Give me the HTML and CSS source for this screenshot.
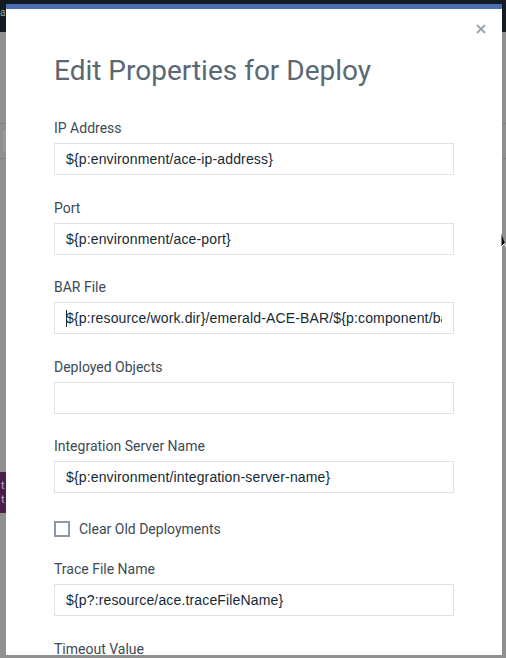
FILE: index.html
```html
<!DOCTYPE html>
<html lang="en">
<head>
<meta charset="utf-8">
<title>Edit Properties for Deploy</title>
<link rel="stylesheet" href="styles.css">
</head>
<body>
<div class="backdrop">
  <div class="topbar"><span class="topbar-text">a</span></div>
  <div class="toolbar"><span class="toolbar-btn"></span></div>
  <div class="side-tag"><span>t</span><span>t</span></div>
</div>

<div class="modal" role="dialog" aria-labelledby="modal-title">
  <button class="close" aria-label="Close">
    <svg width="10" height="10" viewBox="0 0 10 10"><path d="M1 1L9 9M9 1L1 9" stroke="#98a5b1" stroke-width="1.8" fill="none"/></svg>
  </button>
  <h1 id="modal-title" class="title">Edit Properties for Deploy</h1>

  <div class="field">
    <label class="label">IP Address</label>
    <input class="input" type="text" value="${p:environment/ace-ip-address}">
  </div>
  <div class="field">
    <label class="label">Port</label>
    <input class="input" type="text" value="${p:environment/ace-port}">
  </div>
  <div class="field">
    <label class="label">BAR File</label>
    <div class="input-wrap">
      <input class="input" type="text" value="${p:resource/work.dir}/emerald-ACE-BAR/${p:component/bar.name}">
      <span class="caret"></span>
    </div>
  </div>
  <div class="field">
    <label class="label">Deployed Objects</label>
    <input class="input" type="text" value="">
  </div>
  <div class="field">
    <label class="label">Integration Server Name</label>
    <input class="input" type="text" value="${p:environment/integration-server-name}">
  </div>
  <div class="check-row">
    <span class="checkbox"></span>
    <span class="check-label">Clear Old Deployments</span>
  </div>
  <div class="field">
    <label class="label">Trace File Name</label>
    <input class="input" type="text" value="${p?:resource/ace.traceFileName}">
  </div>
  <div class="field">
    <label class="label">Timeout Value</label>
    <input class="input" type="text" value="">
  </div>
</div>

<svg class="cursor" width="8" height="18" viewBox="0 0 8 18"><path d="M1 1L1 15L4.5 11.5L7 17" fill="#000" stroke="#fff" stroke-width="1"/></svg>
</body>
</html>
```

FILE: styles.css
```css
html, body {
  margin: 0;
  padding: 0;
}
body {
  width: 506px;
  height: 658px;
  overflow: hidden;
  background: #8f8f8f;
  font-family: Roboto, "Liberation Sans", sans-serif;
  position: relative;
}
.backdrop {
  display: flex;
  flex-direction: column;
}
.topbar {
  height: 32px;
  background: #131b23;
  color: #9aa0a6;
  font-size: 10px;
  line-height: 12px;
}
.topbar-text {
  display: inline-block;
  margin-left: 0;
  margin-top: 7px;
}
.toolbar {
  margin-top: 91px;
  height: 34px;
  border-top: 1px solid #7d7d7d;
  border-bottom: 1px solid #7d7d7d;
  display: flex;
  align-items: center;
}
.toolbar-btn {
  display: block;
  margin-left: 3px;
  width: 10px;
  height: 22px;
  background: #999999;
}
.side-tag {
  margin-top: 313px;
  width: 18px;
  height: 41px;
  background: #4a1d4b;
  color: #b7a9b8;
  font-size: 11px;
  line-height: 14px;
  display: flex;
  flex-direction: column;
  justify-content: center;
  box-sizing: border-box;
}
.side-tag span {
  margin-left: 1px;
}

.modal {
  position: absolute;
  left: 6px;
  top: 4px;
  width: 496px;
  height: 651px;
  box-sizing: border-box;
  background: #ffffff;
  border-top: 5px solid #4a6eb0;
  padding: 45px 48px 0;
  overflow: hidden;
}
.close {
  position: absolute;
  top: 15px;
  right: 16px;
  width: 10px;
  height: 10px;
  padding: 0;
  border: 0;
  background: none;
  display: block;
}
.close svg {
  display: block;
}
.title {
  margin: 0 0 30px;
  font-size: 28px;
  line-height: 34px;
  font-weight: 400;
  color: #5a6872;
}
.field {
  display: flex;
  flex-direction: column;
  margin-bottom: 22.5px;
}
.label {
  display: block;
  font-size: 14px;
  line-height: 20px;
  color: #3d4a55;
  margin-bottom: 5px;
}
.input-wrap {
  position: relative;
  display: flex;
}
.input {
  box-sizing: border-box;
  width: 400px;
  height: 32px;
  margin: 0;
  padding: 0 11px;
  border: 1px solid #dfe3e6;
  border-radius: 0;
  background: #ffffff;
  font-family: "Liberation Sans", Arial, sans-serif;
  font-size: 14px;
  letter-spacing: 0.15px;
  color: #152935;
  outline: none;
}
.caret {
  position: absolute;
  left: 12px;
  top: 8px;
  width: 1px;
  height: 17px;
  background: #152935;
}
.check-row {
  display: flex;
  align-items: center;
  height: 26px;
  margin-bottom: 17.5px;
}
.checkbox {
  box-sizing: border-box;
  width: 16px;
  height: 16px;
  border: 2px solid #8a99a5;
  background: #ffffff;
}
.check-label {
  margin-left: 9px;
  font-size: 14px;
  line-height: 20px;
  color: #3d4a55;
}
.cursor {
  position: absolute;
  left: 500px;
  top: 232px;
}
```
